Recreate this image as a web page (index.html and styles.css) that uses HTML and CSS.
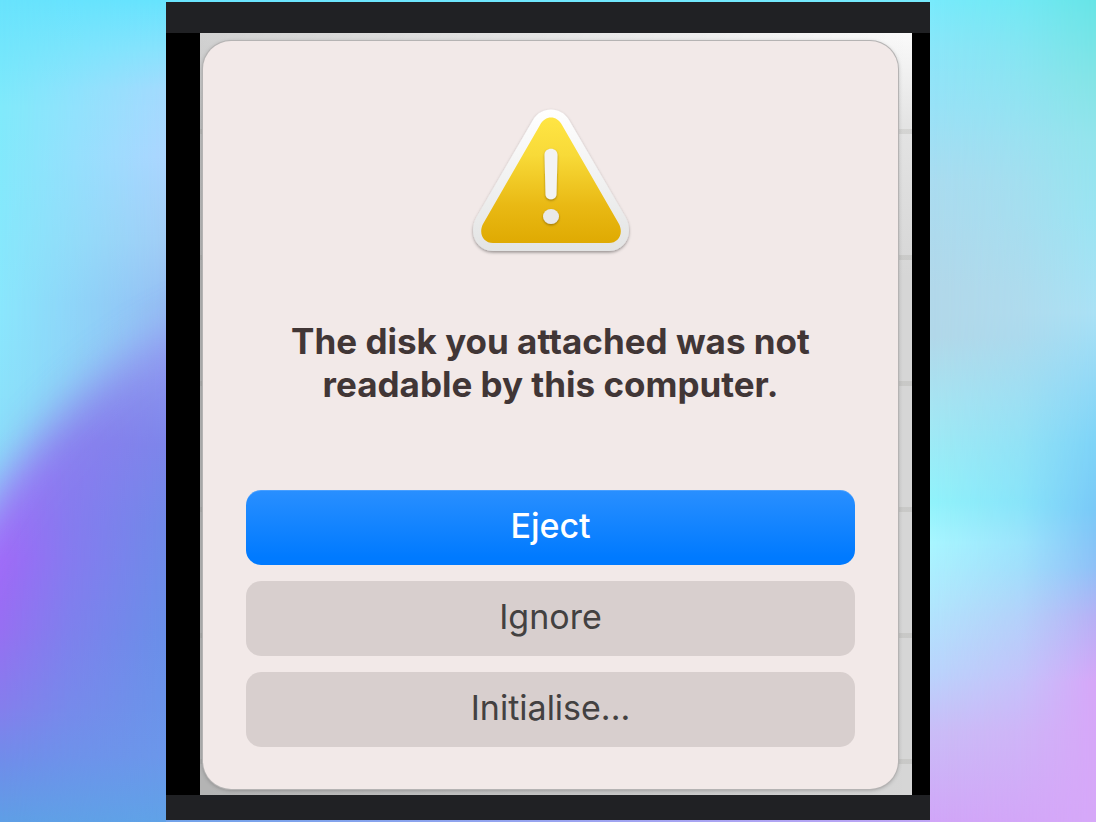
FILE: index.html
```html
<!DOCTYPE html>
<html lang="en-GB">
<head>
<meta charset="utf-8">
<title>Disk not readable</title>
<link rel="stylesheet" href="styles.css">
</head>
<body>
<div class="desktop">
  <div class="wall wall-left" aria-hidden="true">
    <svg class="wave" viewBox="0 0 166 822" preserveAspectRatio="none">
      <defs>
        <linearGradient id="waveNear" gradientUnits="userSpaceOnUse" x1="0" y1="0" x2="0" y2="822">
          <stop offset=".48" stop-color="#9380ee"/>
          <stop offset=".58" stop-color="#9c70f6"/>
          <stop offset=".68" stop-color="#a069f8"/>
          <stop offset=".77" stop-color="#9670f2"/>
          <stop offset=".86" stop-color="#857eed"/>
          <stop offset=".93" stop-color="#6f8eea"/>
          <stop offset="1" stop-color="#5f9fe6"/>
        </linearGradient>
        <linearGradient id="waveFar" gradientUnits="userSpaceOnUse" x1="0" y1="0" x2="0" y2="822">
          <stop offset=".38" stop-color="#9499f2"/>
          <stop offset=".45" stop-color="#8b94ee"/>
          <stop offset=".54" stop-color="#7d85ea"/>
          <stop offset=".64" stop-color="#7089e8"/>
          <stop offset=".77" stop-color="#698fe8"/>
          <stop offset=".92" stop-color="#6b97ea"/>
          <stop offset="1" stop-color="#60a2e7"/>
        </linearGradient>
        <linearGradient id="across">
          <stop offset="0" stop-color="#000"/>
          <stop offset=".42" stop-color="#888"/>
          <stop offset="1" stop-color="#fff"/>
        </linearGradient>
        <mask id="farMask" maskUnits="userSpaceOnUse" x="0" y="0" width="166" height="822">
          <rect width="166" height="822" fill="url(#across)"/>
        </mask>
        <filter id="soft" filterUnits="userSpaceOnUse" x="-120" y="0" width="400" height="1000">
          <feGaussianBlur stdDeviation="22"/>
        </filter>
        <mask id="waveMask" maskUnits="userSpaceOnUse" x="0" y="0" width="166" height="822">
          <path d="M-80 640 Q-30 530 0 492 Q66 392 166 334 L240 300 V1000 H-80Z" fill="#fff" filter="url(#soft)"/>
        </mask>
      </defs>
      <g mask="url(#waveMask)">
        <rect width="166" height="822" fill="url(#waveNear)"/>
        <rect width="166" height="822" fill="url(#waveFar)" mask="url(#farMask)"/>
      </g>
    </svg>
  </div>
  <main class="frame">
    <div class="screen">
      <section class="dialog" role="alertdialog" aria-labelledby="message">
        <svg class="warning" viewBox="0 0 200 180" aria-hidden="true">
          <defs>
            <linearGradient id="rim" x1="0" y1="0" x2="0" y2="1">
              <stop offset="0" stop-color="#fff"/>
              <stop offset="1" stop-color="#e3e4e4"/>
            </linearGradient>
            <linearGradient id="gold" x1="0" y1="0" x2="0" y2="1">
              <stop offset="0" stop-color="#ffe544"/>
              <stop offset=".3" stop-color="#f8da38"/>
              <stop offset=".7" stop-color="#e9b914"/>
              <stop offset="1" stop-color="#dfaa02"/>
            </linearGradient>
            <filter id="rimShadow" x="-10%" y="-10%" width="120%" height="120%">
              <feDropShadow dx="0" dy="1.5" stdDeviation="1.5" flood-color="#000" flood-opacity=".38"/>
            </filter>
            <filter id="markShadow" x="-40%" y="-20%" width="180%" height="150%">
              <feDropShadow dx="0" dy="1.2" stdDeviation=".8" flood-color="#6c5000" flood-opacity=".6"/>
            </filter>
          </defs>
          <path d="M82 30 C90 16 110 16 118 30 L175 128 C183 144 174 161 158 161 H42 C26 161 17 144 25 128Z" fill="url(#rim)" filter="url(#rimShadow)"/>
          <path d="M89 35 C94 25 106 25 111 35 L168 134 C173 144 167 153 158 153 H42 C33 153 27 144 32 134Z" fill="url(#gold)"/>
          <g fill="#f3f3f3" filter="url(#markShadow)">
            <path d="M93.500 65 C93.500 56.500 106.500 56.500 106.500 65 L105.500 104 C105.500 111 94.500 111 94.500 104Z"/>
            <ellipse cx="100" cy="126.500" rx="8" ry="7.500" fill="#e9e9e9"/>
          </g>
        </svg>
        <h1 class="message" id="message">The disk you attached was not<br>readable by this computer.</h1>
        <div class="actions">
          <button class="action action-primary" type="button">Eject</button>
          <button class="action" type="button">Ignore</button>
          <button class="action" type="button">Initialise...</button>
        </div>
      </section>
    </div>
  </main>
  <div class="wall wall-right" aria-hidden="true"></div>
</div>
</body>
</html>
```
FILE: styles.css
```css
* { box-sizing: border-box; }

body {
  margin: 0;
  font-family: Inter, "Liberation Sans", sans-serif;
}

.desktop {
  display: grid;
  grid-template-columns: 166fr 764fr 166fr;
  min-height: 100vh;
  background:
    linear-gradient(90deg, #66e3fe, #78ebfc) top / 100% 50% no-repeat,
    linear-gradient(90deg, #60a2e7, #d1a6f8) bottom / 100% 50% no-repeat;
}

.wall {
  position: relative;
  overflow: hidden;
}

.wall::after {
  content: "";
  position: absolute;
  inset: 0;
}

.wall-left {
  background: linear-gradient(#68e3fd, #80eafb 13%, #8ae7fd 38%, #8cdcf8 60%);
}

.wall-left::after {
  background: linear-gradient(#66e3fe, #88e2fd 6%, #a3dafe 11%, #abd5ff 19%, #a1cdf6 29%, #95bef3 37%, #8fbcf3 60%);
  mask-image: linear-gradient(90deg, transparent, #000);
}

.wave {
  position: absolute;
  inset: 0;
  z-index: 1;
  width: 100%;
  height: 100%;
}

.wall-right {
  background: linear-gradient(#78ebfc, #8be6f9 6%, #98e2f7 13%, #aadcf0 22%, #b2d8ea 35%, #b2d8e9 41%, #a8e3f1 48%, #9aedf7 56%, #91f3fb 61%, #a8f6ff 66%, #b0e8fd 73%, #bad4fc 82%, #cabdf7 89%, #d1a6f8);
}

.wall-right::after {
  background: linear-gradient(#67e4e6, #84e4e6 10%, #93e4ec 17%, #9ae4f2 26%, #aae1f5 38%, #93d9f6 46%, #7dd3f7 54%, #79c8f7 62%, #8ec0f7 69%, #b6b0f5 75%, #d6a6f8 83%, #d6a8f8);
  mask-image: linear-gradient(90deg, transparent, rgba(0, 0, 0, .36) 55%, #000);
}

.frame {
  display: flex;
  flex-direction: column;
  margin: 2px 0;
  padding: 31px 0 25px;
  background: #202124;
}

.screen {
  flex: 1;
  display: flex;
  border: solid #000;
  border-width: 0 18px 0 34px;
  padding: 8px 14px 6px 3px;
  background:
    repeating-linear-gradient(transparent 0 96px, rgba(120, 120, 110, .14) 96px 101px, transparent 101px 126px),
    linear-gradient(90deg, rgba(0, 0, 0, .16), transparent),
    linear-gradient(#fafafa, #e4e4e4 12%, #d6d6d6 32%, #d6d6d6);
}

.dialog {
  flex: 1;
  display: flex;
  flex-direction: column;
  align-items: center;
  padding: 49px 43px 42px;
  border-radius: 28px;
  background: #f2e9e8;
  box-shadow: 0 0 0 1px #b5b3b3, 0 1px 4px rgba(0, 0, 0, .3);
}

.warning {
  width: 200px;
  height: 180px;
}

.message {
  margin: 50px 0 0;
  color: #413636;
  font-size: 35px;
  font-weight: 700;
  line-height: 43px;
  text-align: center;
}

.actions {
  display: flex;
  flex-direction: column;
  gap: 16px;
  width: 100%;
  margin-top: auto;
}

.action {
  height: 75px;
  padding: 0 16px 4px;
  border: 0;
  border-radius: 15px;
  background: #d8cfce;
  color: #434141;
  font: 400 34px/40px Inter, "Liberation Sans", sans-serif;
}

.action-primary {
  background: linear-gradient(#298fff, #007aff 90%);
  box-shadow: inset 0 1px 0 rgba(255, 255, 255, .15);
  color: #fff;
  font-weight: 500;
}
```
